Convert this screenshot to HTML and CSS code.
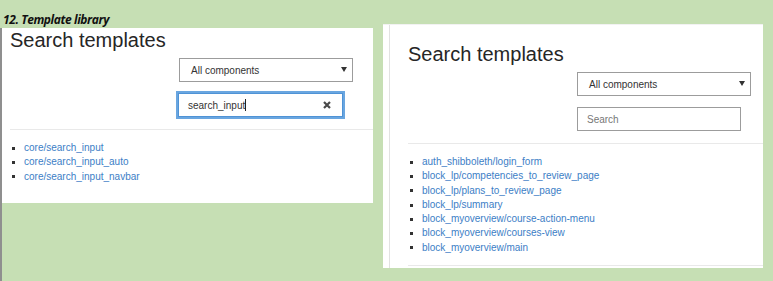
FILE: index.html
```html
<!DOCTYPE html>
<html>
<head>
<meta charset="utf-8">
<link rel="stylesheet" href="styles.css">
</head>
<body>
<div class="col-left">
  <div class="caption">12. Template library</div>
  <div class="frame">
    <div class="panel panel-left">
      <h2 class="title">Search templates</h2>
      <div class="select"><span>All components</span><span class="caret"></span></div>
      <div class="search focused"><span class="val">search_input</span><span class="cursor"></span>
        <svg class="clear" width="8" height="8" viewBox="0 0 8 8"><path d="M1 1L7 7M7 1L1 7" stroke="#4a4a4a" stroke-width="2.2" stroke-linecap="butt"/></svg>
      </div>
      <div class="sep"></div>
      <ul class="list">
        <li><a>core/search_input</a></li>
        <li><a>core/search_input_auto</a></li>
        <li><a>core/search_input_navbar</a></li>
      </ul>
    </div>
  </div>
</div>
<div class="col-right">
  <div class="panel-right">
    <div class="page">
      <h2 class="title">Search templates</h2>
      <div class="select"><span>All components</span><span class="caret"></span></div>
      <div class="search"><span class="ph">Search</span></div>
      <div class="sep"></div>
      <ul class="list">
        <li><a>auth_shibboleth/login_form</a></li>
        <li><a>block_lp/competencies_to_review_page</a></li>
        <li><a>block_lp/plans_to_review_page</a></li>
        <li><a>block_lp/summary</a></li>
        <li><a>block_myoverview/course-action-menu</a></li>
        <li><a>block_myoverview/courses-view</a></li>
        <li><a>block_myoverview/main</a></li>
      </ul>
      <div class="sep sep-bottom"></div>
    </div>
  </div>
</div>
</body>
</html>
```

FILE: styles.css
```css
html, body {
  margin: 0;
  padding: 0;
}
body {
  width: 773px;
  height: 281px;
  overflow: hidden;
  background: #c6dfb4;
  display: flex;
  font-family: "Liberation Sans", Arial, sans-serif;
  color: #333;
}
.col-left {
  width: 373px;
  display: flex;
  flex-direction: column;
}
.caption {
  height: 28px;
  box-sizing: border-box;
  padding: 13px 0 0 3px;
  font-family: "Open Sans", sans-serif;
  font-weight: 700;
  font-style: italic;
  font-size: 12px;
  line-height: 14px;
  letter-spacing: -0.4px;
  color: #111;
}
.frame {
  flex: 1;
  border-left: 2px solid #8f8f8f;
}
.panel-left {
  background: #fff;
  height: 175px;
  padding-left: 8px;
}
.title {
  margin: 0;
  font-size: 20px;
  line-height: 24px;
  font-weight: normal;
  color: #262626;
}
.select {
  margin: 6px 0 0 169px;
  width: 174px;
  height: 24px;
  box-sizing: border-box;
  border: 1px solid #9c9c9c;
  background: #fff;
  display: flex;
  align-items: center;
  justify-content: space-between;
  padding: 0 5px 0 11px;
  font-size: 10px;
  color: #333;
}
.caret {
  width: 0;
  height: 0;
  border-left: 3px solid transparent;
  border-right: 3px solid transparent;
  border-top: 5px solid #333;
  margin-top: -2px;
}
.search {
  margin: 11px 0 0 169px;
  width: 164px;
  height: 24px;
  box-sizing: border-box;
  border: 1px solid #9c9c9c;
  background: #fff;
  display: flex;
  align-items: center;
  padding: 0 9px;
  font-size: 10px;
  color: #333;
}
.search.focused {
  border-color: #4f93d6;
  box-shadow: 0 0 0 2px #6aa6e0;
  margin-left: 168px;
  width: 165px;
}
.cursor {
  width: 0;
  height: 12px;
  border-left: 1px solid #222;
  margin-left: 0;
}
.clear {
  margin-left: auto;
  margin-right: 2px;
}
.ph {
  color: #777;
}
.sep {
  margin-top: 12px;
  height: 1px;
  background: #e9e9e9;
}
.list {
  list-style: none;
  margin: 11px 0 0 0;
  padding: 0;
  font-size: 10px;
  line-height: 14.3px;
}
.list li {
  display: flex;
  align-items: center;
}
.list li::before {
  content: "";
  width: 3px;
  height: 3px;
  background: #333;
  margin: 0 9px 0 2px;
  flex: none;
}
.list a {
  color: #3c7ec6;
}
.col-right {
  margin-left: 10px;
  padding-top: 24px;
}
.panel-right {
  width: 380px;
  height: 244px;
  box-sizing: border-box;
  background: #fff;
  padding-left: 6px;
  border-top: 1px solid #f2f2f2;
}
.page {
  height: 100%;
  box-sizing: border-box;
  border-left: 1px solid #e2e2e2;
  padding: 17px 0 0 18px;
}
.sep-bottom {
  margin-top: 10px;
}
```
